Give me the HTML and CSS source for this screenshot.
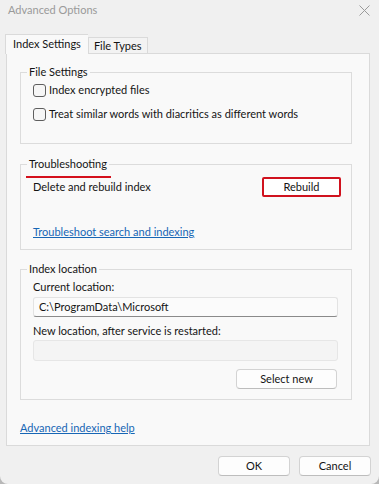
FILE: index.html
```html
<!DOCTYPE html>
<html lang="en">
<head>
 <meta charset="utf-8">
 <title>Advanced Options</title>
 <link rel="stylesheet" href="styles.css">
</head>
<body>

 <div class="dialog">
 <div class="titlebar">
 <span class="title">Advanced Options</span>
 <svg class="close" width="11" height="11" viewBox="0 0 11 11">
 <path d="M0.5 0.5 L10.5 10.5 M10.5 0.5 L0.5 10.5" stroke="#9a9a9a" stroke-width="1" fill="none"/>
 </svg>
 </div>

 <div class="tabs">
 <div class="tab active">Index Settings</div>
 <div class="tab">File Types</div>
 </div>

 <div class="panel">
 <fieldset class="group files">
 <legend>File Settings</legend>
 <label class="check first"><span class="box"></span>Index encrypted files</label>
 <label class="check"><span class="box"></span>Treat similar words with diacritics as different words</label>
 </fieldset>

 <fieldset class="group trouble">
 <legend><span class="mark">Troubleshooting</span></legend>
 <div class="row">
 <span>Delete and rebuild index</span>
 <button class="btn rebuild">Rebuild</button>
 </div>
 <a href="#" class="link">Troubleshoot search and indexing</a>
 </fieldset>

 <fieldset class="group location">
 <legend>Index location</legend>
 <div class="label first">Current location:</div>
 <div class="field">C:\ProgramData\Microsoft</div>
 <div class="label">New location, after service is restarted:</div>
 <div class="field empty"></div>
 <div class="actions"><button class="btn select">Select new</button></div>
 </fieldset>

 <a href="#" class="link help">Advanced indexing help</a>
 </div>

 <div class="footer">
 <button class="btn wide">OK</button>
 <button class="btn wide">Cancel</button>
 </div>
 </div>

</body>
</html>
```

FILE: styles.css
```css
 html, body {
 margin: 0;
 padding: 0;
 background: #b8b8b8;
 }

 body {
 font-family: Lato, "Noto Sans", sans-serif;
 font-size: 11px;
 line-height: 16px;
 color: #141414;
 }

 .dialog {
 width: 379px;
 height: 484px;
 overflow: hidden;
 background: #f0f0f0;
 border-radius: 0 0 8px 8px;
 }

 /* title bar */
 .titlebar {
 height: 34px;
 display: flex;
 justify-content: space-between;
 align-items: flex-start;
 }

 .title {
 margin: 2px 0 0 8px;
 color: #9a9a9a;
 }

 .close {
 margin: 5px 9px 0 0;
 }

 /* tabs */
 .tabs {
 display: flex;
 align-items: flex-end;
 height: 19px;
 margin-left: 5px;
 position: relative;
 z-index: 1;
 }

 .tab {
 box-sizing: border-box;
 height: 16px;
 line-height: 15px;
 padding: 0 5px;
 border: 1px solid #dadada;
 border-bottom: none;
 background: #f3f3f3;
 }

 .tab.active {
 height: 20px;
 line-height: 18px;
 margin-bottom: -1px;
 padding: 0 7px;
 background: #f9f9f9;
 border-right: none;
 }

 /* tab page */
 .panel {
 box-sizing: border-box;
 width: 364px;
 height: 393px;
 margin-left: 6px;
 padding-top: 10px;
 background: #f9f9f9;
 border: 1px solid #dadada;
 }

 .group {
 box-sizing: border-box;
 width: 332px;
 margin: 0 0 0 13px;
 padding: 0 12px;
 border: 1px solid #dcdcdc;
 }

 .group legend {
 margin-left: -6px;
 padding: 0 2px;
 }

 .files { padding-bottom: 17px; }
 .trouble { margin-top: 12px; padding-bottom: 9px; }
 .location { margin-top: 11px; padding-bottom: 10px; }

 .check {
 display: flex;
 align-items: center;
 height: 24px;
 white-space: nowrap;
 }

 .check.first { margin-top: -2px; }

 .box {
 box-sizing: border-box;
 flex: none;
 width: 13px;
 height: 13px;
 margin-right: 3px;
 border: 1px solid #5e5e5e;
 border-radius: 3px;
 background: #f6f6f6;
 }

 .mark {
 position: relative;
 }

 /* red annotation under the group title */
 .mark::after {
 content: "";
 position: absolute;
 left: -3px;
 right: -4px;
 bottom: -8px;
 height: 2px;
 background: #d4101c;
 }

 .row {
 display: flex;
 justify-content: space-between;
 align-items: center;
 margin: 5px -2px 0 0;
 }

 .link {
 display: block;
 width: max-content;
 color: #1766b5;
 text-decoration: underline;
 }

 .trouble .link { margin-top: 27px; }

 .help {
 margin: 20px 0 0 13px;
 }

 .label { margin-top: 6px; }
 .label.first { margin-top: 2px; }

 .field {
 box-sizing: border-box;
 height: 20px;
 margin: 2px 1px 0 0;
 padding: 0 5px;
 line-height: 18px;
 background: #fbfbfb;
 border: 1px solid #e3e3e3;
 border-bottom-color: #8a8a8a;
 border-radius: 3px;
 }

 .field.empty {
 height: 21px;
 margin-top: 1px;
 background: #f4f4f4;
 border-color: #e6e6e6;
 }

 .actions {
 display: flex;
 justify-content: flex-end;
 margin: 8px 2px 0 0;
 }

 /* buttons */
 .btn {
 box-sizing: border-box;
 height: 20px;
 padding: 0;
 font: inherit;
 color: #141414;
 background: #fdfdfd;
 border: 1px solid #d3d3d3;
 border-bottom-color: #bdbdbd;
 border-radius: 4px;
 }

 .rebuild {
 width: 79px;
 border: 2px solid #d0121e;
 border-radius: 2px;
 background: #ffffff;
 }

 .select { width: 101px; }

 .footer {
 display: flex;
 justify-content: flex-end;
 gap: 9px;
 margin: 10px 8px 0 0;
 }

 .wide { width: 72px; }
```
